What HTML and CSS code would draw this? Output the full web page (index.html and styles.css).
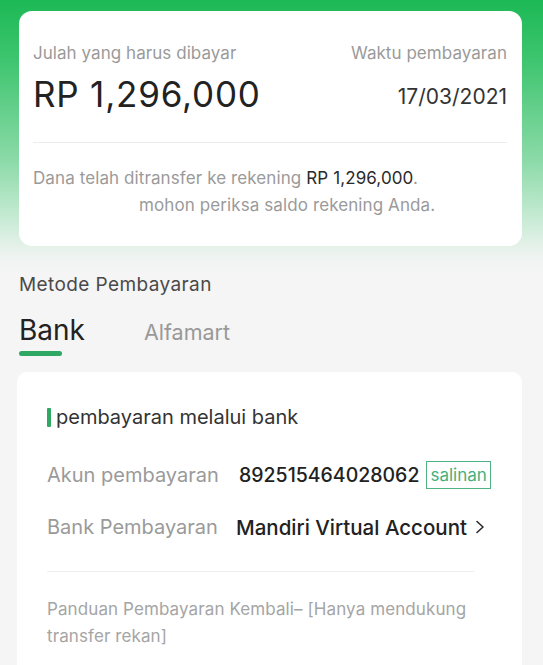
FILE: index.html
```html
<!DOCTYPE html>
<html>
<head>
<meta charset="utf-8">
<link rel="stylesheet" href="styles.css">
</head>
<body>
<div class="page">
  <section class="summary">
    <div class="sum-row">
      <div class="sum-col">
        <div class="label">Julah yang harus dibayar</div>
        <div class="amount">RP 1,296,000</div>
      </div>
      <div class="sum-col right">
        <div class="label">Waktu pembayaran</div>
        <div class="date">17/03/2021</div>
      </div>
    </div>
    <div class="notice">
      <p class="n1">Dana telah ditransfer ke rekening <span class="strong">RP 1,296,000</span>.</p>
      <p class="n2">mohon periksa saldo rekening Anda.</p>
    </div>
  </section>

  <div class="method-title">Metode Pembayaran</div>
  <div class="tabs">
    <div class="tab active">Bank</div>
    <div class="tab">Alfamart</div>
  </div>

  <section class="bank-card">
    <div class="section-title"><span class="bar"></span>pembayaran melalui bank</div>
    <div class="info-row">
      <span class="key">Akun pembayaran</span>
      <span class="val">892515464028062</span>
      <span class="copy">salinan</span>
    </div>
    <div class="info-row">
      <span class="key">Bank Pembayaran</span>
      <span class="val bank">Mandiri Virtual Account</span>
      <svg class="chev" width="10" height="14" viewBox="0 0 10 14"><path d="M2 1.5 L8 7 L2 12.5" fill="none" stroke="#2a2a2a" stroke-width="1.6" stroke-linecap="round" stroke-linejoin="round"/></svg>
    </div>
    <div class="guide">Panduan Pembayaran Kembali– [Hanya mendukung transfer rekan]</div>
  </section>
</div>
</body>
</html>
```

FILE: styles.css
```css
* { box-sizing: border-box; }
html, body { margin: 0; padding: 0; }
body {
  width: 543px;
  height: 665px;
  overflow: hidden;
  font-family: Inter, "Liberation Sans", Arial, sans-serif;
  background: #f5f5f5;
}
.page {
  min-height: 665px;
  padding: 11px 21px 0 19px;
  background: linear-gradient(to bottom, #1cb955 0px, #3ec56f 60px, #8bdaa8 160px, #c3ead1 215px, #eef3f0 255px, #f5f5f5 275px, #f5f5f5 100%);
}
.summary {
  background: #fff;
  border-radius: 13px;
  height: 235px;
  padding: 32px 15px 0 14px;
}
.sum-row {
  display: flex;
  justify-content: space-between;
  border-bottom: 1px solid #ececec;
  height: 100px;
}
.sum-col.right { text-align: right; }
.label {
  font-size: 17px;
  color: #9a9a9a;
  line-height: 20px;
  letter-spacing: 0.05px;
}
.amount {
  font-size: 35px;
  color: #222;
  line-height: 40px;
  margin-top: 11px;
  letter-spacing: 0.8px;
}
.date {
  font-size: 21px;
  color: #333;
  line-height: 24px;
  margin-top: 22px;
}
.notice {
  padding-top: 22px;
  font-size: 17px;
  color: #9a9a9a;
  line-height: 27px;
  letter-spacing: 0.1px;
}
.notice p { margin: 0; }
.n2 { padding-left: 106px; }
.strong { color: #2a2a2a; }

.method-title {
  margin-top: 27px;
  font-size: 19px;
  color: #4a4a4a;
  line-height: 24px;
  letter-spacing: 0.4px;
}
.tabs {
  display: flex;
  align-items: baseline;
  gap: 59px;
  margin-top: 16px;
  height: 45px;
}
.tab {
  font-size: 21.5px;
  color: #999;
  line-height: 30px;
  position: relative;
}
.tab.active {
  font-size: 28px;
  color: #222;
  line-height: 34px;
}
.tab.active::after {
  content: "";
  position: absolute;
  left: 0;
  top: 38px;
  width: 43px;
  height: 5px;
  border-radius: 2.5px;
  background: #2fa864;
}
.bank-card {
  margin-top: 14px;
  margin-left: -2px;
  background: #fff;
  border-radius: 10px;
  padding: 33px 29px 0 30px;
  height: 320px;
}
.section-title {
  display: flex;
  align-items: center;
  font-size: 20px;
  color: #333;
  line-height: 24px;
}
.section-title .bar {
  width: 4px;
  height: 19px;
  background: #2fa864;
  margin-right: 5px;
  border-radius: 1px;
}
.info-row {
  display: flex;
  align-items: center;
  margin-top: 31px;
  height: 30px;
}
.info-row + .info-row { margin-top: 22px; }
.key {
  font-size: 20px;
  color: #9a9a9a;
  width: 192px;
  flex: none;
}
.val {
  font-size: 19.5px;
  color: #222;
  font-weight: 500;
}
.bank { margin-left: -3px; font-size: 20.5px; }
.copy {
  margin-left: 7px;
  border: 1.5px solid #4fb383;
  color: #45b07c;
  font-size: 17px;
  padding: 2px 3px;
  line-height: 22px;
}
.chev { margin-left: 8px; }
.guide {
  margin-top: 29px;
  border-top: 1px solid #eeeeee;
  padding-top: 24px;
  font-size: 17px;
  color: #a5a5a5;
  line-height: 27px;
  width: 427px;
  letter-spacing: 0.1px;
}
```
